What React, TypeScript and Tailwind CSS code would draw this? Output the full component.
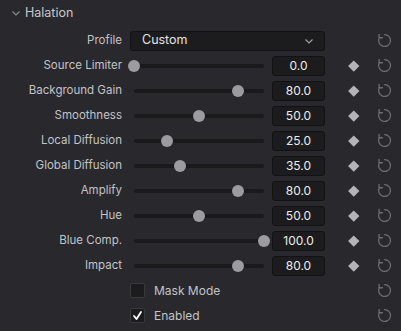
import React from "react";

type Param = { label: string; value: number; max: number };

const params: Param[] = [
  { label: "Source Limiter", value: 0, max: 100 },
  { label: "Background Gain", value: 80, max: 100 },
  { label: "Smoothness", value: 50, max: 100 },
  { label: "Local Diffusion", value: 25, max: 100 },
  { label: "Global Diffusion", value: 35, max: 100 },
  { label: "Amplify", value: 80, max: 100 },
  { label: "Hue", value: 50, max: 100 },
  { label: "Blue Comp.", value: 100, max: 100 },
  { label: "Impact", value: 80, max: 100 },
];

function ResetIcon() {
  return (
    <svg width="17" height="17" viewBox="0 0 16 16" fill="none" stroke="#6c6c71" strokeWidth="1.2" strokeLinecap="round" strokeLinejoin="round">
      <path d="M3.2 5.2A5.6 5.6 0 1 0 8 2.4" />
      <path d="M2.9 2.2v3.2h3.2" />
    </svg>
  );
}

function Side({ diamond }: { diamond?: boolean }) {
  return (
    <>
      <div className="ml-[24px] w-[9px] flex justify-center">
        {diamond && <div className="w-[7.5px] h-[7.5px] rotate-45 bg-[#b4b4b8]" />}
      </div>
      <div className="ml-[18px] w-[17px] flex justify-center">
        <ResetIcon />
      </div>
    </>
  );
}

function SliderRow({ p }: { p: Param }) {
  const pct = (p.value / p.max) * 100;
  return (
    <div className="flex items-center h-[25px]">
      <div className="w-[122px] text-right text-[11.5px] text-[#c4c4c6]">{p.label}</div>
      <div className="ml-[6px] w-[142px] relative h-[14px] flex items-center">
        <div className="absolute left-[6px] right-[6px] h-[4px] rounded-full bg-[#1a1a1d]" />
        <div className="absolute left-[6px] right-[6px] h-[14px]">
          <div
            className="absolute top-[1px] w-[12px] h-[12px] -ml-[6px] rounded-full bg-[#9c9ca0]"
            style={{ left: `${pct}%` }}
          />
        </div>
      </div>
      <div className="ml-[2px] w-[53px] h-[20px] rounded-[3px] bg-[#1c1c1e] border border-[#121214] flex items-center justify-center text-[12px] text-[#ececec]">
        {p.value.toFixed(1)}
      </div>
      <Side diamond />
    </div>
  );
}

function CheckRow({ label, checked }: { label: string; checked?: boolean }) {
  return (
    <div className="flex items-center h-[25px]">
      <div className="w-[130px]" />
      <div className="w-[15px] h-[15px] rounded-[2px] bg-[#1c1c1e] border border-[#3a3a3e] flex items-center justify-center">
        {checked && (
          <svg width="11" height="11" viewBox="0 0 11 11" fill="none" stroke="#ffffff" strokeWidth="1.8" strokeLinecap="round" strokeLinejoin="round">
            <path d="M2 6l2.5 3L9 2" />
          </svg>
        )}
      </div>
      <div className="ml-[9px] w-[171px] text-[12px] text-[#c4c4c6]">{label}</div>
      <Side />
    </div>
  );
}

export default function App() {
  return (
    <div className="w-[401px] h-[331px] bg-[#28282d] overflow-hidden" style={{ fontFamily: "Inter, 'Noto Sans', sans-serif" }}>
      <div className="flex items-center h-[26px] pl-[11px]">
        <svg width="10" height="10" viewBox="0 0 10 10" fill="none" stroke="#8a8a8e" strokeWidth="1.2">
          <path d="M1.5 3.5L5 7l3.5-3.5" />
        </svg>
        <span className="ml-[4px] text-[12.5px] text-[#c8c8ca]">Halation</span>
      </div>
      <div className="pt-[2px]">
        <div className="flex items-center h-[25px]">
          <div className="w-[122px] text-right text-[11.5px] text-[#c4c4c6]">Profile</div>
          <div className="ml-[8px] w-[195px] h-[20px] rounded-[3px] bg-[#1c1c1e] border border-[#121214] flex items-center justify-between pl-[11px] pr-[10px]">
            <span className="text-[12.5px] text-[#e4e4e6]">Custom</span>
            <svg width="10" height="10" viewBox="0 0 10 10" fill="none" stroke="#a0a0a4" strokeWidth="1.2">
              <path d="M1.5 3.5L5 7l3.5-3.5" />
            </svg>
          </div>
          <Side />
        </div>
        {params.map((p) => (
          <SliderRow key={p.label} p={p} />
        ))}
        <CheckRow label="Mask Mode" />
        <CheckRow label="Enabled" checked />
      </div>
    </div>
  );
}
